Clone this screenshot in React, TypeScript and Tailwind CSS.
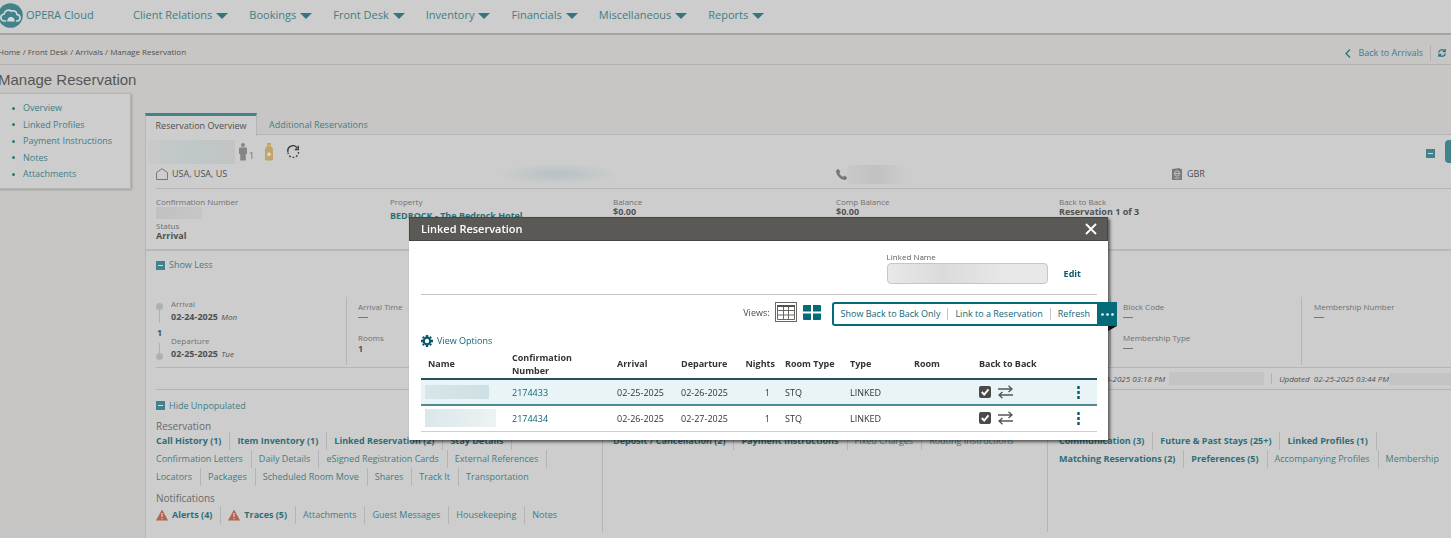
import type { ReactNode } from "react";

const navItems = ["Client Relations", "Bookings", "Front Desk", "Inventory", "Financials", "Miscellaneous", "Reports"];
const sideItems = ["Overview", "Linked Profiles", "Payment Instructions", "Notes", "Attachments"];

type LinkItem = { label: string; bold?: boolean; alert?: boolean };

const reservationRows: LinkItem[][] = [
  [
    { label: "Call History (1)", bold: true },
    { label: "Item Inventory (1)", bold: true },
    { label: "Linked Reservation (2)", bold: true },
    { label: "Stay Details", bold: true },
  ],
  [{ label: "Confirmation Letters" }, { label: "Daily Details" }, { label: "eSigned Registration Cards" }, { label: "External References" }],
  [{ label: "Locators" }, { label: "Packages" }, { label: "Scheduled Room Move" }, { label: "Shares" }, { label: "Track It" }, { label: "Transportation" }],
];
const notificationRow: LinkItem[] = [
  { label: "Alerts (4)", bold: true, alert: true },
  { label: "Traces (5)", bold: true, alert: true },
  { label: "Attachments" },
  { label: "Guest Messages" },
  { label: "Housekeeping" },
  { label: "Notes" },
];
const financialRow: LinkItem[] = [
  { label: "Deposit / Cancellation (2)", bold: true },
  { label: "Payment Instructions", bold: true },
  { label: "Fixed Charges" },
  { label: "Routing Instructions" },
];
const profileRows: LinkItem[][] = [
  [
    { label: "Communication (3)", bold: true },
    { label: "Future & Past Stays (25+)", bold: true },
    { label: "Linked Profiles (1)", bold: true },
  ],
  [
    { label: "Matching Reservations (2)", bold: true },
    { label: "Preferences (5)", bold: true },
    { label: "Accompanying Profiles" },
    { label: "Membership" },
  ],
];
const linked = [
  { number: "2174433", arrival: "02-25-2025", departure: "02-26-2025" },
  { number: "2174434", arrival: "02-26-2025", departure: "02-27-2025" },
];

function Caret() {
  return (
    <svg className="h-[6px] w-[12px]" viewBox="0 0 12 6" fill="#33777e">
      <path d="M0 0h12L6 6z" />
    </svg>
  );
}

function MinusBox() {
  return (
    <svg className="h-[9px] w-[9px] shrink-0" viewBox="0 0 9 9">
      <rect width="9" height="9" fill="#43828a" />
      <path d="M2 4.5h5" stroke="#d5dedf" strokeWidth="1" />
    </svg>
  );
}

function Alert() {
  return (
    <svg className="mr-1 h-[12px] w-[12px]" viewBox="0 0 12 12">
      <path d="M6 .5 12 11.5H0z" fill="#b5634b" />
      <path d="M6 4v4M6 9v1.3" stroke="#dcc9c3" strokeWidth="1.3" />
    </svg>
  );
}

function Links({ items, open }: { items: LinkItem[]; open?: boolean }) {
  return (
    <div className="flex h-[18px] whitespace-nowrap">
      {items.map((it, i) => (
        <a
          key={it.label}
          href="#"
          className={
            "flex items-center pr-[8px] leading-[18px] " +
            (i === 0 ? "" : "pl-[7px] ") +
            (open && i === items.length - 1 ? "" : "border-r border-[#b4b4b4] ") +
            (it.bold ? "font-bold text-[#2d6f77]" : "text-[#3f7d84]")
          }
        >
          {it.alert && <Alert />}
          {it.label}
        </a>
      ))}
    </div>
  );
}

function Field({ label, children }: { label: string; children?: ReactNode }) {
  return (
    <div className="flex flex-col">
      <span className="text-[8px] leading-[10px] text-[#707070]">{label}</span>
      <span className="h-[12px] leading-[10px] font-bold whitespace-nowrap text-[#505050]">{children}</span>
    </div>
  );
}

function Detail({ label, children }: { label: string; children: ReactNode }) {
  return (
    <div className="flex h-[31px] flex-col">
      <span className="text-[8px] leading-[10px] text-[#707070]">{label}</span>
      <span className="leading-[12px] font-bold text-[#555]">{children}</span>
    </div>
  );
}

function Dash() {
  return <span className="mt-[5px] block h-px w-[10px] bg-[#777]" />;
}

function Swap() {
  return (
    <svg className="h-[14px] w-[15px]" viewBox="0 0 15 14" fill="none" stroke="#565656" strokeWidth="1.3">
      <path d="M0 4h14M10.5.8 14 4l-3.5 3M15 10H1M4.500 7 1 10l3.500 3.200" />
    </svg>
  );
}

function Th({ children, right }: { children: ReactNode; right?: boolean }) {
  return <th className={"align-middle font-bold " + (right ? "text-right" : "text-left")}>{children}</th>;
}

function Dialog() {
  return (
    <div className="fixed inset-0 flex items-start justify-center pt-[217px] pl-[66px]">
      <section role="dialog" aria-label="Linked Reservation" className="w-[699px] bg-white pb-[8px] shadow-[2px_2px_3px_rgba(0,0,0,0.6)]">
        <header className="flex h-[24px] items-center justify-between border border-[#474644] bg-[#5a5956] pr-[10px] pl-[11px]">
          <h2 className="text-[11px] font-semibold text-white">Linked Reservation</h2>
          <button aria-label="Close">
            <svg className="h-[12px] w-[12px]" viewBox="0 0 12 12" stroke="#fff" strokeWidth="1.800">
              <path d="M1 1l10 10M11 1 1 11" />
            </svg>
          </button>
        </header>
        <div className="pr-[11px] pl-[12px]">
          <div className="flex h-[54px] items-start justify-end border-b border-[#c4c4c4] pt-[11px]">
            <label className="flex flex-col text-[8px] leading-[10px] text-[#5c5c5c]">
              Linked Name
              <input
                readOnly
                className="mt-[1px] h-[21px] w-[161px] rounded-[4px] border border-[#c6c6c6] bg-linear-to-r from-[#e8e8e8] via-[#dbdbdb] via-35% to-[#e8e8e8] to-75%"
              />
            </label>
            <button className="mt-[14px] mr-[16px] ml-[16px] leading-[16px] font-bold text-[#0a5c6d]">Edit</button>
          </div>
          <div className="-mr-[20px] mt-[7px] flex h-[25px] items-start justify-end">
            <span className="mr-[5px] leading-[22px] text-[#4a4a4a]">Views:</span>
            <button aria-label="Table view" className="mr-[6px] flex h-[20px] w-[22px] items-center justify-center border border-[#6a6865]">
              <svg className="h-[16px] w-[18px]" viewBox="0 0 18 16" fill="none" stroke="#6a6865">
                <path d="M.5 1.500h17v14H.5zM.5 6.500h17M.5 11h17M6.500 2v13.500M11.500 2v13.500" />
                <path d="M0 2h18" stroke="#55534f" strokeWidth="2" />
              </svg>
            </button>
            <button aria-label="Card view" className="mt-[3px] mr-[11px]">
              <svg className="h-[15px] w-[18px]" viewBox="0 0 18 15" fill="#066b79">
                <path d="M0 1q0-1 1-1h7v6.500H0zM10 0h7q1 0 1 1v5.500h-8zM0 8.500h8V15H1q-1 0-1-1zM10 8.500h8V14q0 1-1 1h-7z" />
              </svg>
            </button>
            <div className="relative flex h-[24px]">
              <div className="flex items-center rounded-l-[3px] border-2 border-r-0 border-[#066b79] bg-white text-[#0e6775]">
                <button className="px-[7px] leading-[12px]">Show Back to Back Only</button>
                <button className="border-l border-[#c4c4c4] px-[7px] leading-[12px]">Link to a Reservation</button>
                <button className="border-l border-[#c4c4c4] px-[7px] leading-[12px]">Refresh</button>
              </div>
              <button aria-label="More actions" className="flex w-[20px] items-center justify-center bg-[#066b79]">
                <svg className="h-[3px] w-[13px]" viewBox="0 0 13 3" fill="#fff">
                  <circle cx="1.500" cy="1.500" r="1.300" />
                  <circle cx="6.500" cy="1.500" r="1.300" />
                  <circle cx="11.500" cy="1.500" r="1.300" />
                </svg>
              </button>
              <svg className="absolute top-[24px] right-0 h-[5px] w-[9px]" viewBox="0 0 9 5">
                <path d="M0 0h9L0 5z" fill="#111" />
              </svg>
            </div>
          </div>
          <button className="mt-[6px] flex h-[16px] items-center gap-[4px] text-[#0e6775]">
            <svg className="h-[12px] w-[12px]" viewBox="0 0 12 12" fill="none" stroke="#07596b">
              <circle cx="6" cy="6" r="3.300" strokeWidth="2.200" />
              <path d="M6 0v2M6 10v2M0 6h2M10 6h2M1.800 1.800 3 3M9 9l1.200 1.200M10.200 1.800 9 3M3 9l-1.200 1.200" strokeWidth="2.400" />
            </svg>
            View Options
          </button>
          <table className="w-full table-fixed border-collapse leading-[13px] text-[#333]">
            <colgroup>
              <col className="w-[91px]" />
              <col className="w-[105px]" />
              <col className="w-[64px]" />
              <col className="w-[61px]" />
              <col className="w-[33px]" />
              <col className="w-[75px]" />
              <col className="w-[64px]" />
              <col className="w-[65px]" />
              <col />
              <col className="w-[36px]" />
            </colgroup>
            <thead className="whitespace-nowrap text-[#333]">
              <tr className="h-[30px] border-b-2 border-[#20525a]">
                <th className="pl-[7px] text-left font-bold">Name</th>
                <Th>
                  Confirmation
                  <br />
                  Number
                </Th>
                <Th>Arrival</Th>
                <Th>Departure</Th>
                <Th right>Nights</Th>
                <th className="pl-[10px] text-left font-bold">Room Type</th>
                <Th>Type</Th>
                <Th>Room</Th>
                <Th>Back to Back</Th>
                <th aria-label="Actions" />
              </tr>
            </thead>
            <tbody>
              {linked.map((r, i) => (
                <tr key={r.number} className={i === 0 ? "h-[26px] border-b-2 border-[#4d8b91] bg-[#e9f4f7]" : "h-[26px] border-b border-[#cfcfcf]"}>
                  <td className="pl-[4px]">
                    <div className={i === 0 ? "h-[14px] w-[64px] bg-linear-to-r from-[#d6e6ea] to-[#cfe0e4]" : "h-[18px] w-[71px] bg-linear-to-r from-[#dae8eb] to-[#eef2f3]"} />
                  </td>
                  <td>
                    <a href="#" className="text-[#0e6775]">
                      {r.number}
                    </a>
                  </td>
                  <td>{r.arrival}</td>
                  <td>{r.departure}</td>
                  <td className="pr-[5px] text-right">1</td>
                  <td className="pl-[10px]">STQ</td>
                  <td>LINKED</td>
                  <td />
                  <td>
                    <div className="flex items-center gap-[7px]">
                      <label className="grid h-[12px] w-[12px]">
                        <input type="checkbox" defaultChecked aria-label={"Back to back " + r.number} className="col-start-1 row-start-1 h-[12px] w-[12px] appearance-none rounded-[2px] bg-[#4b4a48]" />
                        <svg className="col-start-1 row-start-1 h-[12px] w-[12px]" viewBox="0 0 12 12" fill="none" stroke="#fff" strokeWidth="1.900">
                          <path d="M2.800 6l2.400 2.600 4.300-5.200" />
                        </svg>
                      </label>
                      <Swap />
                    </div>
                  </td>
                  <td>
                    <button aria-label={"Actions for " + r.number} className="ml-[16px] block">
                      <svg className="h-[13px] w-[3px]" viewBox="0 0 3 13" fill="#07596b">
                        <path d="M.3 0h2.400v3H.3zM.3 5h2.400v3H.3zM.3 10h2.400v3H.3z" />
                      </svg>
                    </button>
                  </td>
                </tr>
              ))}
            </tbody>
          </table>
        </div>
      </section>
    </div>
  );
}

export default function App() {
  return (
    <div className="min-h-screen overflow-hidden bg-[#c7c6c4] font-['Open_Sans','Noto_Sans',sans-serif] text-[9px] text-[#505050]">
      <div className="-ml-[2px]">
        <header className="flex h-[35px] items-center border-b-2 border-[#a5a4a2] bg-[#cdcdcd] pb-[2px] text-[#3f7d84]">
          <svg className="h-[25px] w-[25px]" viewBox="0 0 25 25">
            <circle cx="12.500" cy="12.500" r="12.300" fill="#43828a" />
            <path d="M8 18H6.500a3.500 3.500 0 0 1-.3-7 4.300 4.300 0 0 1 7-2.800 4 4 0 0 1 5.800 3.300 3.300 3.300 0 0 1 .5 6.500H18" fill="none" stroke="#d3dcdd" strokeWidth="1.600" />
            <path d="M9 18.500c.5-2 1-4.500 4-4.500s3.500 2.500 4 4.500z" fill="#d3dcdd" />
          </svg>
          <span className="ml-[3px] w-[107px] text-[11px]">OPERA Cloud</span>
          <nav className="flex gap-[21px]">
            {navItems.map((n) => (
              <a key={n} href="#" className="flex items-center gap-[4px] text-[11px] whitespace-nowrap">
                {n}
                <Caret />
              </a>
            ))}
          </nav>
        </header>
        <div className="flex h-[30px] items-center justify-between border-b border-[#b3b2b0]">
          <span className="pt-[5px] text-[8px] text-[#505050]">Home / Front Desk / Arrivals / Manage Reservation</span>
          <div className="flex h-full items-center pt-[7px] pr-[5px] text-[#3f7d84]">
            <a href="#" className="flex items-center gap-[7px]">
              <svg className="h-[9px] w-[6px]" viewBox="0 0 6 9" fill="none" stroke="#33777e" strokeWidth="1.500">
                <path d="M5 .5 1 4.500l4 4" />
              </svg>
              Back to Arrivals
            </a>
            <span className="mx-[7px] h-[16px] w-px bg-[#b0afad]" />
            <button aria-label="Refresh page">
              <svg className="h-[8px] w-[8px]" viewBox="0 0 8 8" fill="none" stroke="#33777e" strokeWidth="1.300">
                <path d="M.7 3.600A3.200 3.200 0 0 1 6.500 2M7.300 4.400A3.200 3.200 0 0 1 1.500 6M7.200 0v2.600H4.600M.8 8V5.400h2.600" />
              </svg>
            </button>
          </div>
        </div>
        <h1 className="h-[28px] font-['Liberation_Sans',Arial,sans-serif] text-[15px] leading-[29px] text-[#565656]">Manage Reservation</h1>
        <div className="flex items-start">
          <nav className="w-[133px] shrink-0 border border-[#b5b5b5] bg-[#cdcdcd] py-[6px] shadow-[1px_1px_2px_rgba(0,0,0,0.2)]">
            <ul className="flex h-[82px] flex-col justify-between">
              {sideItems.map((s) => (
                <li key={s} className="flex items-center leading-[16px] text-[#3f7d84]">
                  <span className="mr-[8px] ml-[13px] h-[3px] w-[3px] rounded-full bg-[#33777e]" />
                  <a href="#">{s}</a>
                </li>
              ))}
            </ul>
          </nav>
          <main className="ml-[14px] min-w-0 flex-1 pt-[20px]">
            <div className="flex h-[22px]">
              <button className="h-[23px] w-[112px] shrink-0 border-x border-t-3 border-x-[#b5b5b5] border-t-[#43828a] bg-[#cdcdcd] text-[#505050]">Reservation Overview</button>
              <div className="flex flex-1 border-b border-[#b5b5b5]">
                <button className="ml-[12px] pt-[3px] text-[#3f7d84]">Additional Reservations</button>
              </div>
            </div>
            <div className="min-h-[403px] border-l border-[#b5b5b5] bg-[#cdcdcd]">
              <div className="flex h-[28px] items-center pt-[5px] pl-[2px]">
                <span className="h-[24px] w-[87px] bg-linear-to-r from-[#c9c9c9] via-[#bfc7c9] to-[#c3c3c3]" />
                <svg className="ml-[4px] h-[18px] w-[8px]" viewBox="0 0 8 18" fill="#858585">
                  <circle cx="4" cy="2" r="2" />
                  <path d="M1 4.500h6q1 0 1 1V11H6.800v6.500H1.200V11H0V5.500q0-1 1-1z" />
                </svg>
                <span className="ml-[2px] pt-[8px] text-[#7b6f5c]">1</span>
                <svg className="ml-[11px] h-[18px] w-[8px]" viewBox="0 0 8 18" fill="#c1a468">
                  <path d="M2 0h4v2H2zM2.500 2.500h3L8 6v10.500q0 1-1 1H1q-1 0-1-1V6z" />
                  <path d="M4 8.500l.8 1.700 1.800.2-1.300 1.200.3 1.900L4 12.600l-1.600.9.3-1.900-1.300-1.200 1.800-.2z" fill="#e0dccf" />
                </svg>
                <svg className="ml-[14px] h-[13px] w-[13px]" viewBox="0 0 13 13" fill="none" stroke="#3e3e3e" strokeWidth="1.400">
                  <path d="M1 7A5 5 0 0 1 10.300 3.500" />
                  <path d="M11.500 7A5 5 0 0 1 1 7.500" strokeDasharray="1.800 1.800" />
                  <path d="M11.300.8V4.500H7.800" />
                </svg>
                <span className="ml-auto pt-[4px]">
                  <MinusBox />
                </span>
                <button aria-label="Panel menu" className="ml-[10px] h-[23px] w-[6px] rounded-l-[4px] bg-[#43828a]" />
              </div>
              <div className="ml-[10px] grid h-[26px] grid-cols-[340px_340px_336px_1fr] items-center border-b border-[#b5b5b5] pb-[4px]">
                <div className="flex items-center gap-[4px]">
                  <svg className="h-[12px] w-[12px]" viewBox="0 0 12 12" fill="none" stroke="#777">
                    <path d="M.5 11.500V4.500L6 .7l5.500 3.800v7z" />
                  </svg>
                  USA, USA, US
                </div>
                <div className="h-[22px] w-[124px] bg-radial from-[#b7c1c4] to-[#cdcdcd] to-70%" />
                <div className="flex items-center">
                  <svg className="h-[11px] w-[11px]" viewBox="0 0 11 11" fill="#777">
                    <path d="M2.500 0 4.400 2.800 3.200 4.200Q4.500 6.800 7 7.900l1.300-1.300L11 8.400q-.2 2.600-2.400 2.600Q5.500 11 2.800 8T0 2.500Q.2.200 2.500 0z" />
                  </svg>
                  <span className="h-[19px] w-[60px] bg-linear-to-r from-[#c9c9c9] via-[#c1c1c1] to-[#cdcdcd]" />
                </div>
                <div className="flex items-center gap-[5px]">
                  <svg className="h-[12px] w-[10px]" viewBox="0 0 10 12">
                    <path d="M0 1 8 0v1h2v11H0z" fill="#7a7a7a" />
                    <circle cx="5" cy="5.500" r="2.600" fill="none" stroke="#c8c8c8" strokeWidth=".9" />
                    <path d="M2.500 5.500h5M2.500 10h5" stroke="#c8c8c8" strokeWidth=".9" />
                  </svg>
                  GBR
                </div>
              </div>
              <div className="grid h-[62px] grid-cols-[234px_223px_223px_223px_1fr] border-b-2 border-[#b8b8b8] pt-[8px] pl-[10px]">
                <div>
                  <Field label="Confirmation Number">
                    <span className="block h-[12px] w-[46px] bg-linear-to-r from-[#c1c1c1] to-[#c6c6c6]" />
                  </Field>
                  <div className="h-[2px]" />
                  <Field label="Status">Arrival</Field>
                </div>
                <Field label="Property">
                  <a href="#" className="leading-[18px] text-[#2d6f77]">
                    BEDROCK - The Bedrock Hotel
                  </a>
                </Field>
                <Field label="Balance">$0.00</Field>
                <Field label="Comp Balance">$0.00</Field>
                <Field label="Back to Back">Reservation 1 of 3</Field>
              </div>
              <div className="ml-[10px]">
                <button className="flex h-[28px] items-center gap-[4px] text-[#3f7d84]">
                  <MinusBox />
                  Show Less
                </button>
                <div className="grid h-[89px] grid-cols-[191px_191px_191px_191px_191px_191px_1fr] border-b border-[#b4b4b4] pt-[18px] pb-[2px]">
                  <div className="flex border-r border-[#b4b4b4]">
                    <div className="flex w-[7px] flex-col items-center pt-[6px]">
                      <span className="h-[7px] w-[7px] shrink-0 rounded-full bg-[#b0b0b0]" />
                      <span className="h-[13px] w-px bg-[#b0b0b0]" />
                      <span className="h-[20px] leading-[20px] font-bold">1</span>
                      <span className="h-[10px] w-px bg-[#b0b0b0]" />
                      <span className="h-[7px] w-[7px] shrink-0 rounded-full bg-[#b0b0b0]" />
                    </div>
                    <div className="ml-[8px] leading-[12px]">
                      <div className="pt-[1px] text-[8px] text-[#707070]">Arrival</div>
                      <div className="h-[25px] leading-[14px] whitespace-nowrap">
                        <b>02-24-2025</b> <i className="ml-px text-[8px]">Mon</i>
                      </div>
                      <div className="text-[8px] text-[#707070]">Departure</div>
                      <div className="leading-[14px] whitespace-nowrap">
                        <b>02-25-2025</b> <i className="ml-px text-[8px]">Tue</i>
                      </div>
                    </div>
                  </div>
                  <div className="border-r border-[#b4b4b4] pt-[5px] pl-[11px]">
                    <Detail label="Arrival Time">
                      <Dash />
                    </Detail>
                    <Detail label="Rooms">1</Detail>
                  </div>
                  <div className="border-r border-[#b4b4b4]" />
                  <div className="border-r border-[#b4b4b4]" />
                  <div className="border-r border-[#b4b4b4]" />
                  <div className="border-r border-[#b4b4b4] pt-[5px] pl-[12px]">
                    <Detail label="Block Code">
                      <Dash />
                    </Detail>
                    <Detail label="Membership Type">
                      <Dash />
                    </Detail>
                  </div>
                  <div className="pt-[5px] pl-[12px]">
                    <Detail label="Membership Number">
                      <Dash />
                    </Detail>
                  </div>
                </div>
                <div className="flex h-[22px] items-center justify-end border-b border-[#b4b4b4] text-[8px] whitespace-nowrap italic">
                  <span>02-25-2025 03:18 PM</span>
                  <span className="ml-[4px] h-[13px] w-[95px] bg-[#c4c4c4]" />
                  <span className="mx-[7px] h-[11px] w-px bg-[#b0b0b0]" />
                  <span>Updated&nbsp; 02-25-2025 03:44 PM</span>
                  <span className="h-[12px] w-[62px] bg-[#c4c4c4]" />
                </div>
                <button className="flex h-[31px] items-center gap-[4px] text-[#3f7d84]">
                  <MinusBox />
                  Hide Unpopulated
                </button>
                <div className="grid h-[111px] grid-cols-[446px_446px_1fr]">
                  <div>
                    <h3 className="h-[11px] text-[10px] leading-[11px] text-[#6a6a6a]">Reservation</h3>
                    {reservationRows.map((r, i) => (
                      <Links key={i} items={r} open={i === 2} />
                    ))}
                    <h3 className="mt-[7px] h-[13px] text-[10px] leading-[11px] text-[#6a6a6a]">Notifications</h3>
                    <Links items={notificationRow} open />
                  </div>
                  <div className="border-x border-[#b4b4b4] pt-[11px] pl-[10px]">
                    <Links items={financialRow} open />
                  </div>
                  <div className="pt-[11px] pl-[11px]">
                    {profileRows.map((r, i) => (
                      <Links key={i} items={r} open={i === 1} />
                    ))}
                  </div>
                </div>
              </div>
            </div>
          </main>
        </div>
      </div>
      <Dialog />
    </div>
  );
}
